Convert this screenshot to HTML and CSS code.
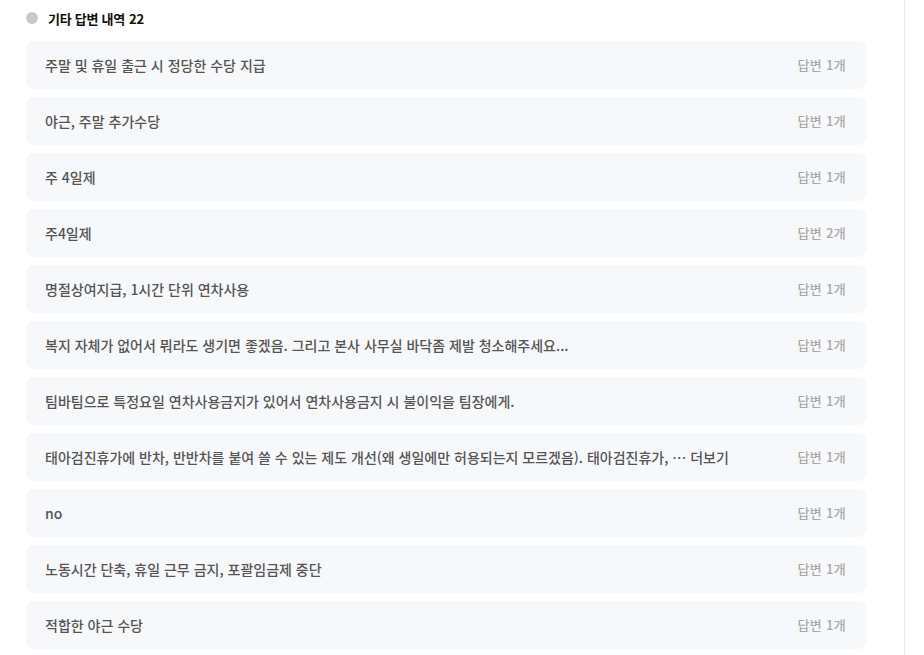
FILE: index.html
```html
<!DOCTYPE html>
<html lang="ko">
<head>
<meta charset="utf-8">
<link rel="stylesheet" href="styles.css">
</head>
<body>
<div class="page">
  <section class="section">
    <h2 class="title"><span class="dot"></span>기타 답변 내역 <span class="count">22</span></h2>
    <ul class="list">
      <li class="item"><span class="text">주말 및 휴일 출근 시 정당한 수당 지급</span><span class="meta">답변 1개</span></li>
      <li class="item"><span class="text">야근, 주말 추가수당</span><span class="meta">답변 1개</span></li>
      <li class="item"><span class="text">주 4일제</span><span class="meta">답변 1개</span></li>
      <li class="item"><span class="text">주4일제</span><span class="meta">답변 2개</span></li>
      <li class="item"><span class="text">명절상여지급, 1시간 단위 연차사용</span><span class="meta">답변 1개</span></li>
      <li class="item"><span class="text">복지 자체가 없어서 뭐라도 생기면 좋겠음. 그리고 본사 사무실 바닥좀 제발 청소해주세요...</span><span class="meta">답변 1개</span></li>
      <li class="item"><span class="text">팀바팀으로 특정요일 연차사용금지가 있어서 연차사용금지 시 불이익을 팀장에게.</span><span class="meta">답변 1개</span></li>
      <li class="item"><span class="text">태아검진휴가에 반차, 반반차를 붙여 쓸 수 있는 제도 개선(왜 생일에만 허용되는지 모르겠음). 태아검진휴가, … 더보기</span><span class="meta">답변 1개</span></li>
      <li class="item"><span class="text">no</span><span class="meta">답변 1개</span></li>
      <li class="item"><span class="text">노동시간 단축, 휴일 근무 금지, 포괄임금제 중단</span><span class="meta">답변 1개</span></li>
      <li class="item"><span class="text">적합한 야근 수당</span><span class="meta">답변 1개</span></li>
    </ul>
  </section>
</div>
</body>
</html>
```

FILE: styles.css
```css
html, body {
  margin: 0;
  padding: 0;
  background: #ffffff;
}
body {
  font-family: "Noto Sans CJK KR", "Noto Sans", sans-serif;
}
.page {
  width: 905px;
  height: 655px;
  border-right: 1px solid #e8e8ea;
  box-sizing: border-box;
  overflow: hidden;
}
.section {
  padding: 8px 0 0 26px;
  width: 840px;
}
.title {
  display: flex;
  align-items: center;
  margin: 0 0 13px 0;
  height: 20px;
  font-size: 13px;
  font-weight: 700;
  color: #111111;
  letter-spacing: -0.25px;
}
.dot {
  width: 12px;
  height: 12px;
  border-radius: 50%;
  background: #c8c8c8;
  margin-right: 10px;
}
.count {
  margin-left: 4px;
}
.list {
  list-style: none;
  margin: 0;
  padding: 0;
  display: flex;
  flex-direction: column;
  gap: 8px;
}
.item {
  height: 48px;
  box-sizing: border-box;
  display: flex;
  align-items: center;
  justify-content: space-between;
  padding: 0 20px 1px 19px;
  background: #f7f8fa;
  border-radius: 8px;
}
.text {
  font-size: 14px;
  font-weight: 500;
  color: #555555;
  letter-spacing: 0;
}
.meta {
  font-size: 13px;
  font-weight: 500;
  color: #aaaaaa;
  letter-spacing: 0.3px;
}
```
